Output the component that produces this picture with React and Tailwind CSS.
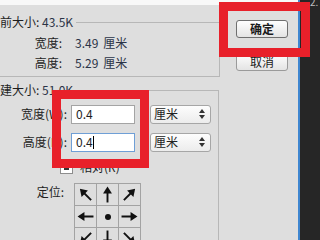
import React from 'react';

const font = { fontFamily: "'Noto Sans CJK SC', 'Noto Sans', sans-serif" };

const Arrow = ({ rot }) => (
  <svg width="17" height="17" viewBox="0 0 16 16" className={rot}>
    <line x1="8" y1="15.5" x2="8" y2="5" stroke="#111" strokeWidth="1.8" />
    <polygon points="8,0.5 3.8,7 12.2,7" fill="#111" />
  </svg>
);

const anchors = [
  '-rotate-45', 'rotate-0', 'rotate-45',
  '-rotate-90', 'dot', 'rotate-90',
  '-rotate-[135deg]', 'rotate-180', 'rotate-[135deg]',
];

const Spinner = () => (
  <svg width="6" height="10" viewBox="0 0 6 10">
    <polygon points="3,0 0,4 6,4" fill="#333" />
    <polygon points="3,10 0,6 6,6" fill="#333" />
  </svg>
);

const UnitSelect = () => (
  <div className="ml-[15px] w-[61px] h-[19px] flex items-center justify-between pl-[3px] pr-[5px] rounded-[3px] border border-[#a6a6a6] bg-gradient-to-b from-[#fdfdfd] to-[#ececec] text-[12px] text-[#222]">
    <span>厘米</span>
    <Spinner />
  </div>
);

const Btn = ({ children, strong }) => (
  <div
    className={`w-[52px] h-[18px] flex items-center justify-center rounded-[3px] border bg-gradient-to-b from-[#fefefe] to-[#e4e4e4] text-[12px] text-[#1a1a1a] ${
      strong ? 'border-[#6f6f6f] font-bold' : 'border-[#9a9a9a]'
    }`}
  >
    {children}
  </div>
);

export default function App() {
  return (
    <div style={font} className="relative w-[320px] h-[240px] overflow-hidden flex bg-[#dedede] text-[#1e1e1e]">
      <div className="w-[298px] shrink-0 flex flex-col">
        <div className="h-[5px] shrink-0 bg-[#f8f8f8]" />
        <div className="flex shrink-0">
          {/* Left: size groups */}
          <div className="w-[220px] shrink-0 flex flex-col">
            <fieldset className="-ml-[30px] mt-[9px] w-[250px] shrink-0 border border-[#b7b7b7] pl-[17px] pt-[3px] pb-[3px]">
              <legend className="text-[12px] leading-[16px] pr-[3px]">
                当前大小: <span className="text-[#2b3447]">43.5K</span>
              </legend>
              {[['宽度:', '3.49'], ['高度:', '5.29']].map(([l, v]) => (
                <div key={l} className="h-[20px] flex items-center text-[12px]">
                  <span className="w-[74px] text-right">{l}</span>
                  <span className="ml-[13px] text-[#2b3447]">{v}</span>
                  <span className="ml-[5px] text-[#2b3447]">厘米</span>
                </div>
              ))}
            </fieldset>

            <fieldset className="-ml-[30px] mt-[5px] w-[249px] h-[200px] shrink-0 border border-[#b7b7b7] pl-[17px] pt-[6px]">
              <legend className="text-[12px] leading-[16px] pr-[3px]">
                新建大小: <span className="text-[#2b3447]">51.0K</span>
              </legend>
              <div className="h-[20px] flex items-center text-[12px]">
                <span className="w-[79px] text-right">宽度(W):</span>
                <div className="ml-[4px] w-[64px] h-[19px] flex items-center pl-[4px] bg-white border border-[#a4a4a4]">0.4</div>
                <UnitSelect />
              </div>
              <div className="mt-[8px] h-[20px] flex items-center text-[12px]">
                <span className="w-[79px] text-right">高度(H):</span>
                <div className="ml-[4px] w-[64px] h-[19px] flex items-center pl-[4px] bg-white border border-[#6f9fd6]">
                  0.4<span className="w-px h-[13px] bg-black" />
                </div>
                <UnitSelect />
              </div>
              <div className="mt-[5px] h-[20px] flex items-center text-[12px] pl-[72px]">
                <span className="w-[13px] h-[13px] border border-[#8d8d8d] bg-white flex items-center justify-center">
                  <span className="w-[5px] h-[5px] bg-[#333]" />
                </span>
                <span className="ml-[7px]">相对(R)</span>
              </div>
              <div className="mt-[6px] flex text-[12px]">
                <span className="w-[76px] text-right">定位:</span>
                <div className="ml-[10px] grid grid-cols-[22px_22px_22px] border-t border-l border-[#a3a3a3]">
                  {anchors.map((a, i) => (
                    <div key={i} className="w-[22px] h-[22px] flex items-center justify-center border-r border-b border-[#a3a3a3]">
                      {a === 'dot' ? <span className="w-[6px] h-[6px] rounded-full bg-[#111]" /> : <Arrow rot={a} />}
                    </div>
                  ))}
                </div>
              </div>
            </fieldset>
          </div>

          {/* Buttons */}
          <div className="ml-[16px] pt-[15px] flex flex-col gap-[15px]">
            <Btn strong>确定</Btn>
            <Btn>取消</Btn>
          </div>
        </div>
      </div>
      <div className="w-[2px] shrink-0 bg-[#3f86d0]" />
      <div className="flex-1 bg-[#262626] pl-[10px]">
        <span className="block -mt-[4px] text-[10px] leading-[12px] text-[#bdbdbd]">2.</span>
      </div>

      {/* highlight boxes */}
      <div className="absolute left-[219px] top-[2px] w-[91px] h-[55px] border-[9px] border-[#e8202a]" />
      <div className="absolute left-[52px] top-[90px] w-[97px] h-[78px] border-[9px] border-[#e8202a]" />
    </div>
  );
}
